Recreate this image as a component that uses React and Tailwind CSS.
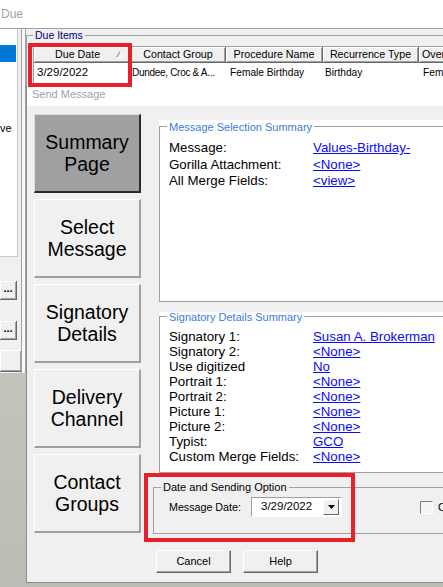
import React from "react";

const navItems = [
  ["Summary", "Page"],
  ["Select", "Message"],
  ["Signatory", "Details"],
  ["Delivery", "Channel"],
  ["Contact", "Groups"],
];

const messageRows = [
  ["Message:", "Values-Birthday-"],
  ["Gorilla Attachment:", "<None>"],
  ["All Merge Fields:", "<view>"],
];

const signatoryRows = [
  ["Signatory 1:", "Susan A. Brokerman"],
  ["Signatory 2:", "<None>"],
  ["Use digitized", "No"],
  ["Portrait 1:", "<None>"],
  ["Portrait 2:", "<None>"],
  ["Picture 1:", "<None>"],
  ["Picture 2:", "<None>"],
  ["Typist:", "GCO"],
  ["Custom Merge Fields:", "<None>"],
];

const columns = [
  { label: "Contact Group", w: "w-[95px]" },
  { label: "Procedure Name", w: "w-[97px]" },
  { label: "Recurrence Type", w: "w-[96px]" },
];

const headerCell =
  "flex items-center justify-center h-[16px] bg-[#f0f0f0] border-r border-b border-[#696969] shadow-[inset_1px_1px_0_#ffffff,inset_-1px_-1px_0_#a0a0a0] text-[10.7px] whitespace-nowrap overflow-hidden";

function SortArrow() {
  return (
    <svg width="8" height="7" viewBox="0 0 8 7" className="ml-auto mr-[6px]">
      <path d="M0.5 6.5 L4 0.5" stroke="#808080" fill="none" />
      <path d="M4 0.5 L7.5 6.5 L0.5 6.5" stroke="#ffffff" fill="none" />
    </svg>
  );
}

function SummaryRows({ rows, rowClass }) {
  return (
    <div className="pl-[9px] text-[13.3px]">
      {rows.map(([label, value]) => (
        <div key={label} className={rowClass}>
          <span className="w-[144px] shrink-0 text-black">{label}</span>
          <span className="text-[#0a0aff] underline whitespace-nowrap">{value}</span>
        </div>
      ))}
    </div>
  );
}

function NavButton({ lines, active }) {
  return (
    <div
      className={
        active
          ? "h-[79px] flex flex-col items-center justify-center bg-[#a0a0a0] border-t border-l border-[#dcdcdc] border-r-2 border-b-2 border-r-[#2a2a2a] border-b-[#2a2a2a] text-[19.5px] leading-[22px] text-black"
          : "h-[79px] flex flex-col items-center justify-center bg-[#f0f0f0] border-t border-l border-white border-r-2 border-b-2 border-r-[#a0a0a0] border-b-[#a0a0a0] text-[19.5px] leading-[22px] text-black"
      }
    >
      <span>{lines[0]}</span>
      <span>{lines[1]}</span>
    </div>
  );
}

function WinButton({ children }) {
  return (
    <div className="w-[75px] h-[23px] flex items-center justify-center bg-[#f0f0f0] border border-t-white border-l-white border-r-[#696969] border-b-[#696969] shadow-[inset_-1px_-1px_0_#a0a0a0] text-[11px]">
      {children}
    </div>
  );
}

export default function App() {
  return (
    <div className="relative w-[443px] h-[587px] overflow-hidden bg-gradient-to-b from-[#cbcbc4] via-[#c6c6bf] to-[#bcbcb5] font-['Liberation_Sans',Arial,sans-serif] text-black">
      {/* back window: Due */}
      <div className="absolute left-0 top-0 w-[443px] h-[373px] flex flex-col bg-[#f0f0f0]">
        <div className="h-[28px] shrink-0 bg-white flex items-center pl-[1px] text-[12px] text-[#a59fa9]">
          Due
        </div>
        <div className="flex flex-1 border-t border-[#a0a0a0]">
          {/* left strip */}
          <div className="w-[21px] shrink-0 flex flex-col">
            <div className="h-[228px] w-[18px] bg-white border-r border-b border-[#c8c8c8] flex flex-col">
              <div className="mt-[16px] h-[17px] w-[16px] bg-[#0078d7]" />
              <div className="mt-[60px] text-[11px] leading-[13px] whitespace-nowrap">ve</div>
            </div>
            <div className="mt-[24px] h-[19px] w-[17px] flex items-center justify-center bg-[#f0f0f0] border-r border-b border-[#696969] shadow-[inset_1px_1px_0_#ffffff,inset_-1px_-1px_0_#a0a0a0] text-[11px] font-bold leading-none pb-[4px]">
              ...
            </div>
            <div className="mt-[21px] h-[19px] w-[17px] flex items-center justify-center bg-[#f0f0f0] border-r border-b border-[#696969] shadow-[inset_1px_1px_0_#ffffff,inset_-1px_-1px_0_#a0a0a0] text-[11px] font-bold leading-none pb-[4px]">
              ...
            </div>
            <div className="mt-[10px] h-[22px] w-[22px] bg-[#f0f0f0] border-r border-b border-[#696969] shadow-[inset_1px_1px_0_#ffffff,inset_-1px_-1px_0_#a0a0a0]" />
          </div>
          {/* splitter */}
          <div className="w-[5px] shrink-0 border-l border-r border-[#a0a0a0] bg-[#f8f8f8]" />
          {/* Due Items group */}
          <div className="flex-1">
            <fieldset className="mt-[2px] h-[100px] w-[440px] border border-[#a0a0a0] pl-[6px] pt-[6px]">
              <legend className="px-[2px] text-[10.5px] leading-[9px] text-[#000080]">Due Items</legend>
              <div className="h-[38px] bg-white border-t border-l border-b border-[#a0a0a0]">
                <div className="flex">
                  <div className={headerCell + " w-[97px] !justify-start pl-[21px]"}>
                    <span>Due Date</span>
                    <SortArrow />
                  </div>
                  {columns.map((c) => (
                    <div key={c.label} className={headerCell + " " + c.w}>
                      {c.label}
                    </div>
                  ))}
                  <div className={headerCell + " w-[120px] !justify-start pl-[3px]"}>Overdue By</div>
                </div>
                <div className="flex h-[19px] items-center text-[10.2px] whitespace-nowrap">
                  <div className="w-[97px] pl-[3px] text-[11.5px]">3/29/2022</div>
                  <div className="w-[95px] pl-[1px] overflow-hidden text-[10px] tracking-[-0.3px]">Dundee, Croc &amp; A...</div>
                  <div className="w-[97px] pl-[4px]">Female Birthday</div>
                  <div className="w-[96px] pl-[2px]">Birthday</div>
                  <div className="w-[120px] pl-[4px]">Female</div>
                </div>
              </div>
            </fieldset>
          </div>
        </div>
      </div>

      {/* front window: Send Message */}
      <div className="absolute left-[26px] top-[83px] w-[440px] h-[500px] flex flex-col bg-[#f0f0f0] border-l border-b border-[#8c8c8c]">
        <div className="h-[23px] shrink-0 bg-white flex items-center pl-[5px] text-[11px] text-[#9aa3ad]">
          Send Message
        </div>
        <div className="flex flex-1 pt-[8px] pl-[7px]">
          <div className="w-[107px] shrink-0 flex flex-col gap-[6px]">
            {navItems.map((lines, i) => (
              <NavButton key={lines[0]} lines={lines} active={i === 0} />
            ))}
          </div>
          <div className="ml-[12px] w-[300px] flex flex-col">
            <div className="ml-[6px] mt-[6px] h-[182px] bg-white">
              <fieldset className="h-full border border-[#a0a0a0]">
                <legend className="ml-[7px] px-[2px] text-[11px] leading-[10px] pt-[2px] text-[#3d7ae0]">
                  Message Selection Summary
                </legend>
                <div className="pt-[8px]">
                  <SummaryRows rows={messageRows} rowClass="flex leading-[16.7px]" />
                </div>
              </fieldset>
            </div>
            <div className="ml-[6px] mt-[10px] h-[161px] bg-white">
              <fieldset className="h-full border border-[#a0a0a0]">
                <legend className="ml-[7px] px-[2px] text-[11px] leading-[8px] pt-[1px] text-[#3d7ae0]">
                  Signatory Details Summary
                </legend>
                <div className="pt-[7.5px]">
                  <SummaryRows rows={signatoryRows} rowClass="flex leading-[15px]" />
                </div>
              </fieldset>
            </div>
            <fieldset className="mt-[10px] h-[51px] border border-[#a0a0a0]">
              <legend className="ml-[7px] px-[2px] text-[11px] leading-[8px]">Date and Sending Option</legend>
              <div className="pt-[6px] pl-[15px] flex items-center h-[26px]">
                <span className="w-[82px] shrink-0 text-[10.7px]">Message Date:</span>
                <div className="w-[91px] h-[20px] shrink-0 flex items-center bg-white border border-t-[#a0a0a0] border-l-[#a0a0a0] border-r-white border-b-white">
                  <span className="pl-[9px] text-[11.5px]">3/29/2022</span>
                  <div className="ml-auto mr-[2px] w-[16px] h-[16px] flex items-center justify-center bg-[#f0f0f0] border border-t-white border-l-white border-r-[#696969] border-b-[#696969]">
                    <svg width="7" height="4" viewBox="0 0 7 4">
                      <path d="M0 0 H7 L3.5 4 Z" fill="#000" />
                    </svg>
                  </div>
                </div>
                <div className="ml-[78px] w-[13px] h-[13px] shrink-0 bg-[#f4f4f4] border border-t-[#808080] border-l-[#808080] border-r-white border-b-white" />
                <span className="ml-[5px] text-[11px] whitespace-nowrap">Change</span>
              </div>
            </fieldset>
            <div className="mt-[16px] pl-[3px] flex gap-[12px]">
              <WinButton>Cancel</WinButton>
              <WinButton>Help</WinButton>
            </div>
          </div>
        </div>
      </div>

      {/* annotation boxes */}
      <div className="absolute left-[28px] top-[43px] w-[104px] h-[44px] border-[4px] border-[#e8202a]" />
      <div className="absolute left-[144px] top-[473px] w-[211px] h-[69px] border-[4px] border-[#e8202a]" />
    </div>
  );
}
